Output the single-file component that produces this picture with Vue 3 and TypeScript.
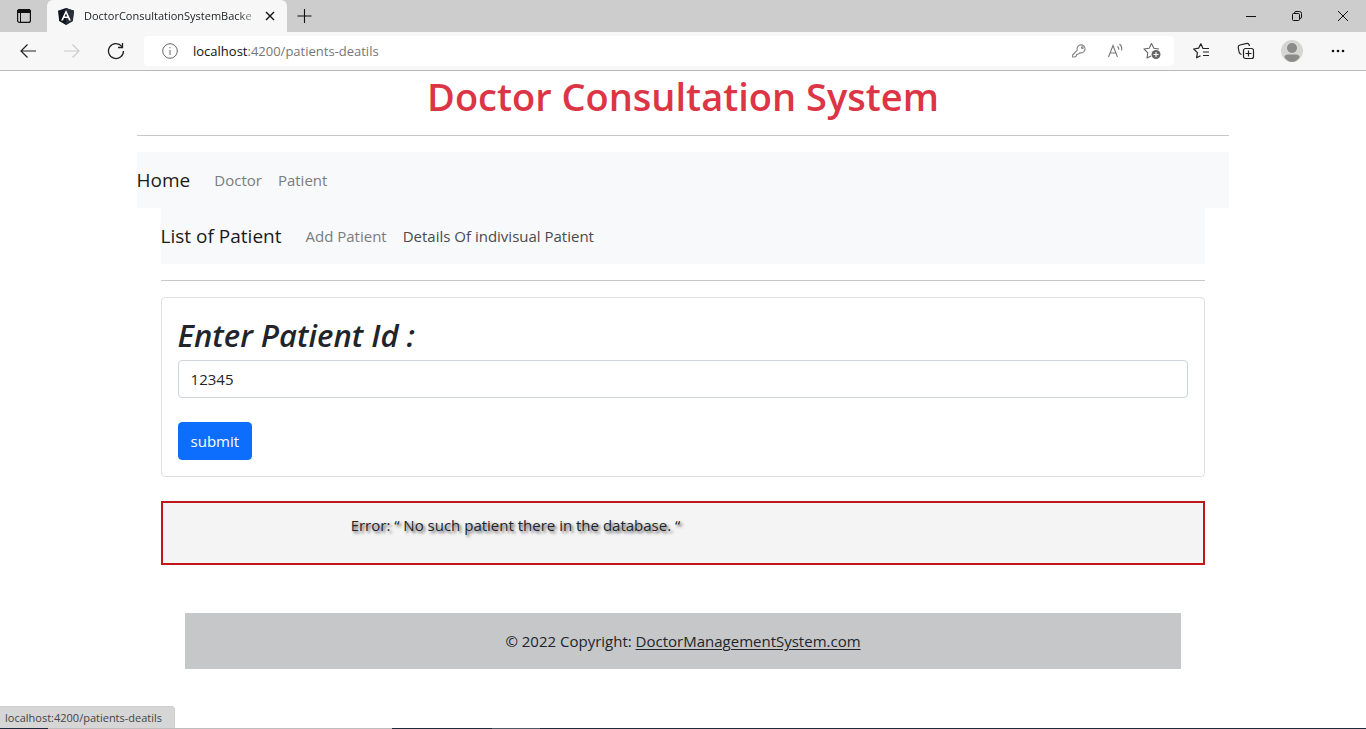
<script setup lang="ts">
import { ref } from 'vue'

const patientId = ref<string>('12345')
const address = ref<string>('localhost:4200/patients-deatils')
</script>

<template>
  <div class="window">
    <header class="tabstrip">
      <button class="icon tab-menu" aria-label="Tab actions">
        <svg width="16" height="16" viewBox="0 0 16 16" fill="none" stroke="#111">
          <rect x="1.6" y="1.6" width="12.8" height="12.8" rx="2" stroke-width="1.2" />
          <path d="M1.5 4.500V3.400Q1.500 1.500 3.400 1.500H12.600Q14.500 1.500 14.500 3.400V4.500Z" fill="#111" />
          <path d="M4.500 5V14" />
        </svg>
      </button>
      <div class="tab">
        <svg width="16" height="17" viewBox="0 0 16 17">
          <path d="M8 0 16 2.8 14.8 13 8 17 1.2 13 0 2.8Z" fill="#10141c" />
          <path d="M8 0 16 2.8 14.8 13 8 17Z" fill="#29303b" />
          <path d="M8 2 12.9 12.6H11L10 10.1H6L5 12.6H3.1ZM8 5.4 6.6 8.6H9.4Z" fill="#fff" fill-rule="evenodd" />
        </svg>
        <span class="tab-title">DoctorConsultationSystemBacke</span>
        <button class="icon tab-close" aria-label="Close tab">
          <svg width="10" height="10" viewBox="0 0 10 10" stroke="#111" stroke-width="1.4"><path d="M1 1 9 9M9 1 1 9" /></svg>
        </button>
      </div>
      <button class="icon new-tab" aria-label="New tab">
        <svg width="16" height="16" viewBox="0 0 16 16" stroke="#111" stroke-width="1.1"><path d="M8.5 1V15M1.5 8H15.5" /></svg>
      </button>
      <div class="window-controls">
        <button class="icon" aria-label="Minimize">
          <svg width="12" height="12" viewBox="0 0 12 12" stroke="#111"><path d="M1 6.5H11" /></svg>
        </button>
        <button class="icon" aria-label="Restore">
          <svg width="12" height="12" viewBox="0 0 12 12" fill="none" stroke="#111"><rect x="1.5" y="3.5" width="7" height="7" rx="1" /><path d="M3.5 3.2V3Q3.5 1.5 5 1.5H8.5Q10.5 1.5 10.5 3.5V7Q10.5 8.5 9 8.5" /></svg>
        </button>
        <button class="icon" aria-label="Close">
          <svg width="12" height="12" viewBox="0 0 12 12" stroke="#111"><path d="M1 1 11 11M11 1 1 11" /></svg>
        </button>
      </div>
    </header>

    <div class="toolbar">
      <nav class="history" aria-label="History">
        <button class="icon" aria-label="Back">
          <svg width="18" height="16" viewBox="0 0 18 16" fill="none" stroke="#222" stroke-width="1.2"><path d="M17 8H2M8.5 1.5 2 8 8.5 14.5" /></svg>
        </button>
        <button class="icon" aria-label="Forward" disabled>
          <svg width="18" height="16" viewBox="0 0 18 16" fill="none" stroke="#ccc" stroke-width="1.2"><path d="M1 8H16M9.5 1.5 16 8 9.5 14.5" /></svg>
        </button>
        <button class="icon" aria-label="Refresh">
          <svg width="18" height="18" viewBox="0 0 18 18" fill="none" stroke="#222" stroke-width="1.3"><path d="M16.5 9A7.5 7.5 0 1 1 14.8 4.3M15.5 1V5.5H11" /></svg>
        </button>
      </nav>
      <div class="address">
        <svg width="16" height="16" viewBox="0 0 16 16" fill="none" stroke="#666"><circle cx="8" cy="8" r="7.3" /><path d="M8 7V12M8 4V5.3" /></svg>
        <label class="url">
          <input v-model="address" class="url-input" type="text" aria-label="Address" />
          <span class="url-text" aria-hidden="true"><b>localhost</b>:4200/patients-deatils</span>
        </label>
        <div class="address-actions">
          <button class="icon" aria-label="Saved passwords">
            <svg width="18" height="16" viewBox="0 0 18 16" fill="none" stroke="#858585" stroke-width="1.1" stroke-linejoin="round"><path d="M6.3 7.2A4 4 0 1 1 9 9.7L6.8 11.4 5.6 11.6 5.2 13.2 3.6 14H1.6V12Z" /><circle cx="11.3" cy="4.7" r=".8" /></svg>
          </button>
          <button class="icon" aria-label="Read aloud">
            <svg width="18" height="16" viewBox="0 0 18 16" fill="none" stroke="#777" stroke-width="1.1"><path d="M1.500 14 6 2.500 10.500 14M3 10H9M10.500 3.500Q12 5 11.800 6.800M12.500 1Q15.500 3.800 14.600 7.500" /></svg>
          </button>
          <button class="icon" aria-label="Add to favorites">
            <svg width="18" height="18" viewBox="0 0 18 18" fill="none" stroke="#666" stroke-width="1.1" stroke-linejoin="round"><path d="M8 14 4 16 4.8 10.8 1 7 6.2 6.2 8.5 1.5 10.9 6.2 16 7" /><circle cx="13" cy="12.5" r="4.5" fill="#666" stroke="none" /><path d="M13 10V15M10.5 12.5H15.5" stroke="#fff" /></svg>
          </button>
        </div>
      </div>
      <div class="tools">
        <button class="icon" aria-label="Favorites">
          <svg width="16" height="16" viewBox="0 0 16 16" fill="none" stroke="#222" stroke-width="1.2" stroke-linejoin="round"><path d="M7.5 12.7 3.6 14.8 4.4 9.6 .7 6 5.6 5.2 7.8 .8 10 5.5H16M10 9H16M10 12.5H16" /></svg>
        </button>
        <button class="icon" aria-label="Collections">
          <svg width="18" height="18" viewBox="0 0 18 18" fill="none" stroke="#222" stroke-width="1.2"><path d="M4.5 12.5 3.2 11.8Q2.3 11 2.1 10L1.2 5.5Q1 3.500 3 3L10 1.3Q11.800 1.200 12.200 3L12.300 4" /><rect x="6.500" y="6.500" width="10" height="10" rx="2" /><path d="M11.500 8.500V14.500M8.500 11.500H14.500" /></svg>
        </button>
        <button class="icon" aria-label="Profile">
          <svg width="22" height="22" viewBox="0 0 22 22"><circle cx="11" cy="11" r="11" fill="#d5d5d3" /><circle cx="11" cy="8" r="5" fill="#8b8b89" /><path d="M3.5 17.5Q3.500 14.500 7 14.500H15Q18.500 14.500 18.500 17.500Q15 22 11 22Q7 22 3.500 17.500Z" fill="#8b8b89" /></svg>
        </button>
        <button class="icon" aria-label="Settings and more">
          <svg width="14" height="4" viewBox="0 0 14 4" fill="#111"><circle cx="2" cy="2" r="1.3" /><circle cx="7" cy="2" r="1.3" /><circle cx="12" cy="2" r="1.3" /></svg>
        </button>
      </div>
    </div>

    <main class="page">
      <h1>Doctor Consultation System</h1>
      <hr />
      <nav class="navbar" aria-label="Main">
        <a class="brand" href="#home">Home</a>
        <a href="#doctor">Doctor</a>
        <a href="#patient">Patient</a>
      </nav>
      <div class="section">
        <nav class="navbar" aria-label="Patient">
          <a class="brand" href="#patients">List of Patient</a>
          <a href="#add">Add Patient</a>
          <a class="active" href="#details">Details Of indivisual Patient</a>
        </nav>
        <hr />
        <form class="card" @submit.prevent>
          <label class="heading" for="patient-id">Enter Patient Id :</label>
          <input id="patient-id" v-model="patientId" class="field" type="text" />
          <button class="submit" type="submit">submit</button>
        </form>
        <div class="error" role="alert">Error: “ No such patient there in the database. “</div>
        <footer class="footer">© 2022 Copyright: <a href="#site">DoctorManagementSystem.com</a></footer>
      </div>
    </main>
    <div class="taskbar"></div>
    <div class="status">localhost:4200/patients-deatils</div>
  </div>
</template>

<style>
body {
  margin: 0;
  background: #fff;
}
</style>

<style scoped>
* {
  box-sizing: border-box;
}
.window {
  position: relative;
  display: flex;
  flex-direction: column;
  min-height: 100vh;
  font-family: "Open Sans", "Noto Sans", sans-serif;
  font-size: 15px;
  line-height: 24px;
  color: #212529;
}
button,
input {
  font: inherit;
  color: inherit;
}
.icon {
  display: flex;
  align-items: center;
  justify-content: center;
  padding: 0;
  border: 0;
  background: none;
}
svg {
  display: block;
  flex: none;
}
.tabstrip {
  display: flex;
  height: 32px;
  background: #cdcdcd;
}
.tab-menu {
  width: 47px;
}
.tab {
  display: flex;
  align-items: center;
  width: 240px;
  padding: 0 10px 0 11px;
  border-radius: 6px 6px 0 0;
  background: #f7f7f7;
}
.tab-title {
  flex: 1;
  margin-left: 10px;
  white-space: nowrap;
  font-size: 11px;
  mask-image: linear-gradient(to right, #000 86%, transparent);
}
.tab-close {
  width: 14px;
  height: 20px;
}
.new-tab {
  width: 34px;
}
.window-controls {
  display: flex;
  margin-left: auto;
}
.window-controls .icon {
  width: 46px;
}
.toolbar {
  display: flex;
  align-items: center;
  height: 39px;
  border-bottom: 1px solid #b9b9b9;
  background: #f7f7f7;
}
.history {
  display: flex;
  padding: 0 6px;
}
.history .icon {
  width: 44px;
}
.address {
  display: flex;
  flex: 1;
  align-items: center;
  height: 30px;
  padding: 0 4px 0 18px;
  border-radius: 4px;
  background: #fff;
}
.url {
  position: relative;
  flex: 1;
  margin-left: 15px;
  font-size: 13px;
}
.url-input {
  display: block;
  width: 100%;
  height: 24px;
  padding: 0;
  border: 0;
  outline: 0;
  background: none;
  color: transparent;
  caret-color: #222;
}
.url-text {
  position: absolute;
  inset: 0;
  pointer-events: none;
  color: #767676;
}
.url-text b {
  font-weight: 400;
  color: #111;
}
.address-actions {
  display: flex;
}
.address-actions .icon {
  width: 36px;
}
.tools {
  display: flex;
  padding: 0 5px 0 4px;
}
.tools .icon {
  width: 46px;
}
.tools .icon:first-child {
  width: 45px;
}
.page {
  flex: 1;
  width: 80%;
  margin: 0 auto;
}
h1 {
  margin: 0;
  text-align: center;
  font-size: 38px;
  font-weight: 600;
  line-height: 50px;
  color: #dc3545;
}
hr {
  height: 1px;
  margin: 16px 0;
  border: 0;
  background: #c8c9ca;
}
h1 + hr {
  margin-top: 14px;
}
.navbar {
  display: flex;
  align-items: center;
  gap: 16px;
  height: 56px;
  background: #f8f9fa;
}
.navbar a {
  text-decoration: none;
  color: #7b7c7d;
}
.navbar .brand {
  margin-right: 8px;
  font-size: 19px;
  line-height: 30px;
  color: #1b1b1c;
}
.navbar .active {
  color: #4a4b4c;
}
.section {
  padding: 0 24px;
}
.card {
  display: flex;
  flex-direction: column;
  align-items: flex-start;
  padding: 16px;
  border: 1px solid #dfdfdf;
  border-radius: 4px;
}
.heading {
  margin-bottom: 4px;
  font-size: 31px;
  font-style: italic;
  font-weight: 600;
  line-height: 42px;
}
.field {
  width: 100%;
  height: 38px;
  margin-bottom: 24px;
  padding: 6px 12px;
  border: 1px solid #ced4da;
  border-radius: 4px;
  background: #fff;
}
.submit {
  height: 38px;
  padding: 6px 12px;
  border: 1px solid #0d6efd;
  border-radius: 4px;
  background: #0d6efd;
  color: #fff;
}
.error {
  height: 64px;
  margin-top: 24px;
  padding: 10px 0 0 18%;
  border: 2px solid #c1161c;
  background: #f4f4f4;
  text-shadow: 2px 2px 3px #555;
}
.footer {
  margin: 48px 24px;
  padding: 16px;
  background: #c6c7c9;
  text-align: center;
}
.footer a {
  color: inherit;
  text-underline-offset: 2px;
}
.taskbar {
  height: 1px;
  background: linear-gradient(to right, #1d2b3a 48px, #bdbdbd 48px 392px, #1d2b3a 392px 492px, #4d5965 492px 540px, #1d2b3a 540px);
}
.status {
  position: absolute;
  bottom: 1px;
  left: 0;
  height: 22px;
  padding: 0 12px 0 5px;
  border: 1px solid #cfcfcf;
  border-width: 1px 1px 0 0;
  border-radius: 0 4px 0 0;
  background: #d6d6d6;
  font-size: 11px;
  line-height: 21px;
  color: #444;
}
</style>
